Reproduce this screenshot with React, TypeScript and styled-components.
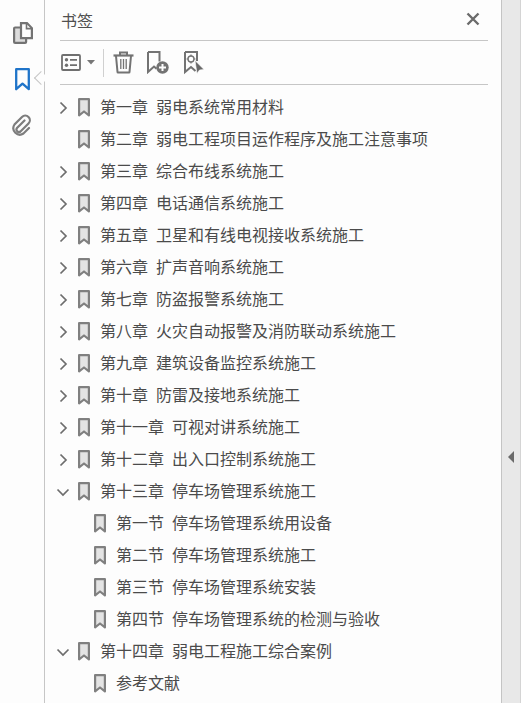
import styled, { createGlobalStyle } from "styled-components";

type Bookmark = {
  title: string;
  toggle?: "closed" | "open";
  child?: boolean;
};

const bookmarks: Bookmark[] = [
  { title: "第一章 弱电系统常用材料", toggle: "closed" },
  { title: "第二章 弱电工程项目运作程序及施工注意事项" },
  { title: "第三章 综合布线系统施工", toggle: "closed" },
  { title: "第四章 电话通信系统施工", toggle: "closed" },
  { title: "第五章 卫星和有线电视接收系统施工", toggle: "closed" },
  { title: "第六章 扩声音响系统施工", toggle: "closed" },
  { title: "第七章 防盗报警系统施工", toggle: "closed" },
  { title: "第八章 火灾自动报警及消防联动系统施工", toggle: "closed" },
  { title: "第九章 建筑设备监控系统施工", toggle: "closed" },
  { title: "第十章 防雷及接地系统施工", toggle: "closed" },
  { title: "第十一章 可视对讲系统施工", toggle: "closed" },
  { title: "第十二章 出入口控制系统施工", toggle: "closed" },
  { title: "第十三章 停车场管理系统施工", toggle: "open" },
  { title: "第一节 停车场管理系统用设备", child: true },
  { title: "第二节 停车场管理系统施工", child: true },
  { title: "第三节 停车场管理系统安装", child: true },
  { title: "第四节 停车场管理系统的检测与验收", child: true },
  { title: "第十四章 弱电工程施工综合案例", toggle: "open" },
  { title: "参考文献", child: true },
];

const GlobalStyle = createGlobalStyle`
  html, body {
    margin: 0;
    padding: 0;
    height: 100%;
    overflow: hidden;
    background: #fdfdfd;
  }
  #root { height: 100%; }
`;

const Window = styled.div`
  display: flex;
  width: 521px;
  height: 703px;
  overflow: hidden;
  font-family: "Noto Sans CJK SC", "Noto Sans", sans-serif;
  color: #4b4b4b;
`;

const Rail = styled.nav`
  position: relative;
  flex: 0 0 45px;
  box-sizing: border-box;
  padding-top: 17px;
  display: flex;
  flex-direction: column;
  align-items: center;
  gap: 14px;
  background: #fdfdfd;
  border-right: 1px solid #c6c6c6;
`;

const RailButton = styled.div<{ $nudge?: number }>`
  width: 24px;
  height: 32px;
  display: flex;
  align-items: center;
  justify-content: center;
  margin-left: ${(p) => p.$nudge ?? 0}px;
`;

const Notch = styled.div`
  position: absolute;
  top: 73px;
  right: -1px;
  width: 9px;
  height: 9px;
  background: #fdfdfd;
  border-left: 1px solid #c6c6c6;
  border-bottom: 1px solid #c6c6c6;
  transform: translateX(1px) rotate(45deg);
`;

const Panel = styled.main`
  flex: 1;
  min-width: 0;
  box-sizing: border-box;
  padding: 0 13px 0 15px;
  background: #fdfdfd;
`;

const PanelHeader = styled.header`
  height: 41px;
  box-sizing: border-box;
  display: flex;
  align-items: center;
  justify-content: space-between;
  border-bottom: 1px solid #c6c6c6;
`;

const PanelTitle = styled.h1`
  margin: 0 0 0 1px;
  font-size: 16px;
  font-weight: 400;
  line-height: 38px;
  color: #505050;
`;

const CloseButton = styled.div`
  display: flex;
  margin-right: 8px;
  margin-bottom: 3px;
`;

const Toolbar = styled.div`
  height: 44px;
  box-sizing: border-box;
  display: flex;
  align-items: center;
  border-bottom: 1px solid #c6c6c6;
  padding-left: 1px;
`;

const ToolButton = styled.div<{ $gap: number }>`
  display: flex;
  align-items: center;
  margin-right: ${(p) => p.$gap}px;
`;

const Divider = styled.div`
  width: 1px;
  height: 28px;
  background: #d0d0d0;
  margin-right: 9px;
`;

const List = styled.ul`
  list-style: none;
  margin: 7px 0 0;
  padding: 0;
`;

const Row = styled.li<{ $child?: boolean }>`
  height: 32px;
  display: flex;
  align-items: center;
  padding-left: ${(p) => (p.$child ? 34 : 18)}px;
  position: relative;
`;

const Toggle = styled.span`
  position: absolute;
  left: -5px;
  top: 8px;
  width: 16px;
  height: 16px;
  display: flex;
`;

const RowMark = styled.span`
  display: flex;
  width: 12px;
  margin-right: 10px;
  margin-bottom: 1px;
`;

const RowText = styled.span`
  font-size: 16px;
  line-height: 32px;
  white-space: nowrap;
  color: #4b4b4b;
  word-spacing: 4.4px;
  margin-bottom: 4px;
`;

const Strip = styled.aside`
  flex: 0 0 20px;
  box-sizing: border-box;
  background: #e8e8e8;
  border-left: 1px solid #c4c4c4;
  border-right: 1px solid #d4d4d4;
  display: flex;
  flex-direction: column;
  align-items: center;
  padding-top: 451px;
`;

const StripArrow = styled.div`
  width: 0;
  height: 0;
  border-top: 6px solid transparent;
  border-bottom: 6px solid transparent;
  border-right: 6px solid #6a6a6a;
`;

const BookmarkGlyph = () => (
  <svg width="12" height="19" viewBox="0 0 12 19">
    <path d="M1.100 1.100h9.800v16.300L6 13.500l-4.900 3.900z" fill="#e4e4e4" stroke="#808080" strokeWidth="2.200" strokeLinejoin="round" />
  </svg>
);

const Chevron = ({ open }: { open: boolean }) => (
  <svg width="16" height="16" viewBox="0 0 16 16" fill="none" stroke="#6d6d6d" strokeWidth="1.700">
    {open ? <path d="M2.500 5.500 8 11l5.500-5.500" /> : <path d="M5.500 2.500 11 8l-5.500 5.500" />}
  </svg>
);

export default function App() {
  return (
    <Window>
      <GlobalStyle />
      <Rail>
        <RailButton $nudge={1}>
          <svg width="20" height="22" viewBox="0 0 20 22" fill="none" stroke="#737373" strokeWidth="2.200">
            <path d="M8 5.500H2.100c-.6 0-1 .4-1 1v13.400c0 .6.400 1 1 1h10c.6 0 1-.4 1-1V16" fill="#dcdcdc" />
            <path d="M8 1.100h6l4.900 5v10H8z" fill="#fdfdfd" />
            <path d="M13.500 1.100v5.500h5.400" strokeWidth="1.600" />
          </svg>
        </RailButton>
        <RailButton>
          <svg width="15" height="23" viewBox="0 0 15 23">
            <path d="M1.200 1.200h12.600v20L7.500 15.600 1.200 21.200z" fill="none" stroke="#1f74c9" strokeWidth="2.300" strokeLinejoin="round" />
          </svg>
        </RailButton>
        <RailButton $nudge={-1}>
          <svg width="21" height="22" viewBox="0 0 21 22" fill="none" stroke="#7d7d7d" strokeWidth="2.200" strokeLinecap="round">
            <path d="M13.500 6.500 6 14a2.500 2.500 0 0 0 3.500 3.500l8-8a4.500 4.500 0 0 0-6.500-6.500L3.500 10.500a6.500 6.500 0 0 0 9 9l5.500-5.500" />
          </svg>
        </RailButton>
        <Notch />
      </Rail>

      <Panel>
        <PanelHeader>
          <PanelTitle>书签</PanelTitle>
          <CloseButton>
            <svg width="14" height="14" viewBox="0 0 14 14" stroke="#6b6b6b" strokeWidth="2.400">
              <path d="M1.500 1.500l11 11M12.500 1.500l-11 11" />
            </svg>
          </CloseButton>
        </PanelHeader>

        <Toolbar>
          <ToolButton $gap={8}>
            <svg width="20" height="17" viewBox="0 0 20 17">
              <rect x="1" y="1" width="18" height="15" rx="1" fill="none" stroke="#6f6f6f" strokeWidth="1.800" />
              <circle cx="5.500" cy="5.800" r="1.700" fill="#6f6f6f" />
              <circle cx="5.500" cy="11.200" r="1.700" fill="#6f6f6f" />
              <path d="M9 5.800h7M9 11.200h7" stroke="#6f6f6f" strokeWidth="1.800" />
            </svg>
            <svg width="8" height="5" viewBox="0 0 8 5" style={{ marginLeft: 6 }}>
              <path d="M0 0h8L4 4.500z" fill="#767676" />
            </svg>
          </ToolButton>
          <Divider />
          <ToolButton $gap={13}>
            <svg width="21" height="23" viewBox="0 0 21 23" fill="none" stroke="#737373" strokeWidth="2">
              <path d="M.5 4.500h20" strokeWidth="2.200" />
              <path d="M7 4V1.500h7V4" />
              <path d="M3 5l1.500 16c0 .3.300.5.500.5h11c.2 0 .5-.2.500-.5L18 5" />
              <path d="M7.800 8v10M10.500 8v10M13.200 8v10" strokeWidth="1.300" />
            </svg>
          </ToolButton>
          <ToolButton $gap={14}>
            <svg width="23" height="23" viewBox="0 0 23 23">
              <path d="M1 1h11.500v9.500M1 1v20l6-5.500 2.500 2.300" fill="none" stroke="#737373" strokeWidth="2" />
              <circle cx="15.500" cy="16.500" r="6.200" fill="#737373" />
              <path d="M15.500 13v7M12 16.500h7" stroke="#fdfdfd" strokeWidth="2" />
            </svg>
          </ToolButton>
          <ToolButton $gap={0}>
            <svg width="21" height="24" viewBox="0 0 21 24">
              <path d="M1 1h12v9M1 1v20l6-5 4.500 4" fill="none" stroke="#737373" strokeWidth="2" />
              <circle cx="7" cy="8" r="3" fill="none" stroke="#737373" strokeWidth="1.400" />
              <path d="M7 3.500V5M7 11v1.500M2.500 8H4M10 8h1.500" stroke="#737373" strokeWidth="1.200" />
              <path d="M11 9.500l9 9-4.500.5-2.500 3.500z" fill="#696969" stroke="#fdfdfd" strokeWidth=".6" />
            </svg>
          </ToolButton>
        </Toolbar>

        <List>
          {bookmarks.map((b) => (
            <Row key={b.title} $child={b.child}>
              {b.toggle && (
                <Toggle>
                  <Chevron open={b.toggle === "open"} />
                </Toggle>
              )}
              <RowMark>
                <BookmarkGlyph />
              </RowMark>
              <RowText>{b.title}</RowText>
            </Row>
          ))}
        </List>
      </Panel>

      <Strip>
        <StripArrow />
      </Strip>
    </Window>
  );
}
